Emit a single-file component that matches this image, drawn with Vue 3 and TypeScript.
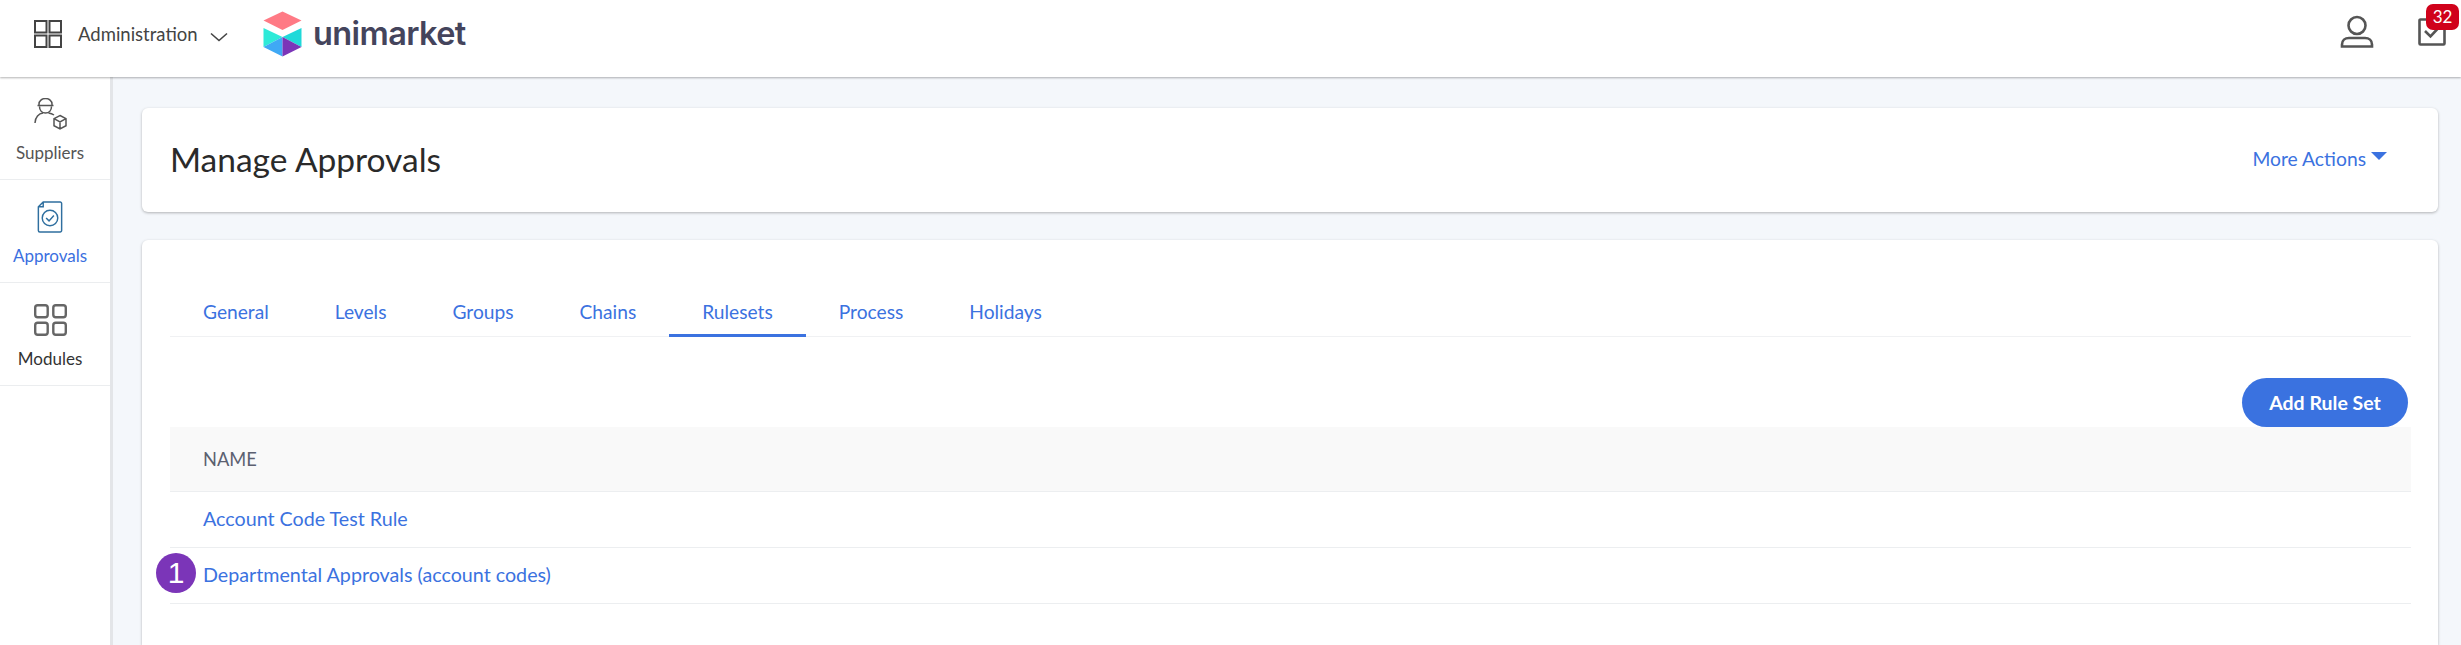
<script setup lang="ts">
const sideItems = ['Suppliers', 'Approvals', 'Modules']
const tabs = ['General', 'Levels', 'Groups', 'Chains', 'Rulesets', 'Process', 'Holidays']
const rows = ['Account Code Test Rule', 'Departmental Approvals (account codes)']
</script>

<template>
  <div class="page">
    <header class="topbar">
      <svg class="grid-icon" width="28" height="28" viewBox="0 0 28 28" fill="none" stroke="#444" stroke-width="2">
        <rect x="1" y="1" width="11.5" height="11.5" /><rect x="15.5" y="1" width="11.5" height="11.5" />
        <rect x="1" y="15.5" width="11.5" height="11.5" /><rect x="15.5" y="15.5" width="11.5" height="11.5" />
      </svg>
      <span class="admin">Administration</span>
      <svg class="chev" width="18" height="10" viewBox="0 0 18 10" fill="none" stroke="#444" stroke-width="1.6"><path d="M1 1.5l8 7 8-7" /></svg>
      <svg class="logo" width="40" height="46" viewBox="0 0 40 46">
        <path d="M0.5 9.5L19.5 0.5 38.5 9.5 19.5 19z" fill="#ff7a85" />
        <path d="M0.5 17L19.5 26 0.5 36z" fill="#2eead8" />
        <path d="M38.5 17L19.5 26 38.5 36z" fill="#20d9d9" />
        <path d="M0.5 36L19.5 26V45.5z" fill="#3fa9f5" />
        <path d="M38.5 36L19.5 26V45.5z" fill="#7b35b8" />
      </svg>
      <span class="brand">unimarket</span>
      <span class="spacer"></span>
      <svg class="user" width="34" height="34" viewBox="0 0 34 34" fill="none" stroke="#555" stroke-width="2.6">
        <circle cx="17" cy="10.5" r="8.5" />
        <path d="M2 31.5v-2c0-4 3-6.5 7-6.5h16c4 0 7 2.5 7 6.5v2z" />
      </svg>
      <div class="tasks">
        <svg width="28" height="28" viewBox="0 0 28 28" fill="none" stroke="#555" stroke-width="2.6">
          <path d="M22 1.5H2.5a1 1 0 0 0-1 1v23a1 1 0 0 0 1 1h23a1 1 0 0 0 1-1V9" />
          <path d="M7 13l5.5 5.5L25 5" />
        </svg>
        <span class="badge">32</span>
      </div>
    </header>
    <div class="body">
      <nav class="side">
        <div v-for="item in sideItems" :key="item" class="side-item" :class="{ active: item === 'Approvals' }">
          <svg v-if="item === 'Suppliers'" width="33" height="32" viewBox="0 0 33 32" fill="none" stroke="#555" stroke-width="1.5">
            <path d="M5 7.500V6a6.500 5.500 0 0 1 13 0v1.500M3.500 7.500h16M5.500 8.500c0 4 2.500 6.500 6 6.500s6-2.500 6-6.500" />
            <path d="M1 25c0-6 4-9.500 8-10M14.500 15c2 .3 4 1 5.500 2" />
            <path d="M26 17.500l6 3.200v7L26 31l-6-3.300v-7zM20 20.700l6 3.300 6-3.300M26 24v7" />
          </svg>
          <svg v-else-if="item === 'Approvals'" width="26" height="33" viewBox="0 0 26 33" fill="none" stroke="#2f6f9f" stroke-width="1.5">
            <path d="M6 1h17.500a1.500 1.500 0 0 1 1.500 1.500v28a1.500 1.500 0 0 1-1.500 1.500h-21A1.500 1.500 0 0 1 1 30.500V6zM6 1v5H1" />
            <circle cx="13" cy="17.500" r="8" />
            <path d="M9 17.500l3 3 5-5.500" />
          </svg>
          <svg v-else width="33" height="32" viewBox="0 0 33 32" fill="none" stroke="#666" stroke-width="2.4">
            <rect x="1.200" y="1.200" width="12.500" height="12" rx="2.500" /><rect x="19.300" y="1.200" width="12.500" height="12" rx="2.500" />
            <rect x="1.200" y="18.800" width="12.500" height="12" rx="2.500" /><rect x="19.300" y="18.800" width="12.500" height="12" rx="2.500" />
          </svg>
          <span>{{ item }}</span>
        </div>
      </nav>
      <main class="main">
        <section class="card title-card">
          <h1>Manage Approvals</h1>
          <span class="more">More Actions<i class="caret"></i></span>
        </section>
        <section class="card content-card">
          <div class="tabs">
            <a v-for="tab in tabs" :key="tab" class="tab" :class="{ on: tab === 'Rulesets' }">{{ tab }}</a>
          </div>
          <div class="actions"><button class="add">Add Rule Set</button></div>
          <div class="thead">NAME</div>
          <div v-for="(row, i) in rows" :key="row" class="row">
            <span v-if="i === 1" class="marker">1</span>{{ row }}
          </div>
        </section>
      </main>
    </div>
  </div>
</template>

<style>
html, body { margin: 0; background: #fff; overflow: hidden; }
</style>

<style scoped>
.page { width: 2461px; height: 645px; overflow: hidden; display: flex; flex-direction: column; font-family: Lato, "Noto Sans", sans-serif; }
.topbar { height: 77px; flex: none; display: flex; align-items: center; background: #fff; padding: 0 0 10px 34px; box-sizing: border-box; position: relative; z-index: 2; box-shadow: 0 1px 2px rgba(0,0,0,.3); }
.admin { margin-left: 16px; font-size: 18.500px; color: #444; width: 124px; }
.chev { margin-left: 8px; margin-top: 6px; }
.logo { margin-left: 35px; }
.brand { margin-left: 10px; font-family: Inter, sans-serif; font-weight: 600; font-size: 32.500px; letter-spacing: -0.6px; color: #44445c; }
.spacer { flex: 1; }
.user { margin-right: 44px; margin-top: -3px; }
.tasks { position: relative; width: 28px; height: 28px; margin-right: 15px; margin-top: -3px; }
.tasks svg { display: block; }
.badge { position: absolute; left: 8px; top: -14px; width: 33px; height: 26px; background: #d0021b; border-radius: 7px; color: #fff; font-size: 17px; text-align: center; line-height: 25px; }
.body { flex: 1; display: flex; min-height: 0; }
.side { width: 110px; flex: none; background: #fff; border-right: 3px solid #e3e5e8; }
.side-item { height: 103px; border-bottom: 1px solid #ebedef; display: flex; flex-direction: column; align-items: center; padding: 21px 10px 0 0; box-sizing: border-box; color: #555; font-size: 17px; gap: 13px; }
.side-item svg { display: block; flex: none; height: 32px; }
.side-item span { line-height: 20px; }
.side-item.active { color: #3b6fe0; }
.side-item:last-child { color: #333; }
.main { flex: 1; background: #f4f7fb; padding: 31px 23px 0 29px; display: flex; flex-direction: column; gap: 28px; min-width: 0; }
.card { background: #fff; border-radius: 6px; box-shadow: 0 1px 3px rgba(0,0,0,.28); }
.title-card { height: 104px; flex: none; display: flex; align-items: center; padding: 0 51px 0 28px; }
h1 { margin: 0; flex: 1; font-size: 33.500px; font-weight: 400; color: #2a2a2a; line-height: 102px; height: 104px; }
.more { color: #3b72e0; font-size: 19.300px; display: flex; align-items: center; margin-top: -3px; }
.caret { display: block; width: 0; height: 0; margin: -6px 0 0 5px; border: 8px solid transparent; border-top: 8px solid #3b72e0; border-bottom: 0; }
.content-card { flex: 1; padding: 36px 27px 0 28px; border-radius: 6px 6px 0 0; }
.tabs { display: flex; height: 61px; border-bottom: 1px solid #f0f1f3; box-sizing: border-box; }
.tab { padding: 0 33px; color: #3b72e0; font-size: 19.200px; line-height: 72px; height: 61px; box-sizing: border-box; }
.tab.on { border-bottom: 3px solid #3b72e0; }
.actions { display: flex; justify-content: flex-end; padding: 41px 3px 0 0; }
.add { width: 166px; height: 49px; border: 0; border-radius: 25px; background: #3a72e0; color: #fff; font-size: 19.500px; font-weight: 700; font-family: inherit; padding: 0; }
.thead { height: 65px; background: #f9f9f9; border-bottom: 1px solid #eceef0; box-sizing: border-box; padding-left: 33px; line-height: 64px; font-size: 18.300px; color: #5b6070; }
.row { height: 56px; position: relative; border-bottom: 1px solid #eceef0; box-sizing: border-box; padding-left: 33px; line-height: 54px; font-size: 19.700px; color: #3b72e0; }
.marker { position: absolute; left: -14px; top: 5px; width: 40px; height: 40px; border-radius: 50%; background: #7b35b8; color: #fff; font-family: "Liberation Sans", sans-serif; font-size: 30px; line-height: 40px; text-align: center; }
</style>
